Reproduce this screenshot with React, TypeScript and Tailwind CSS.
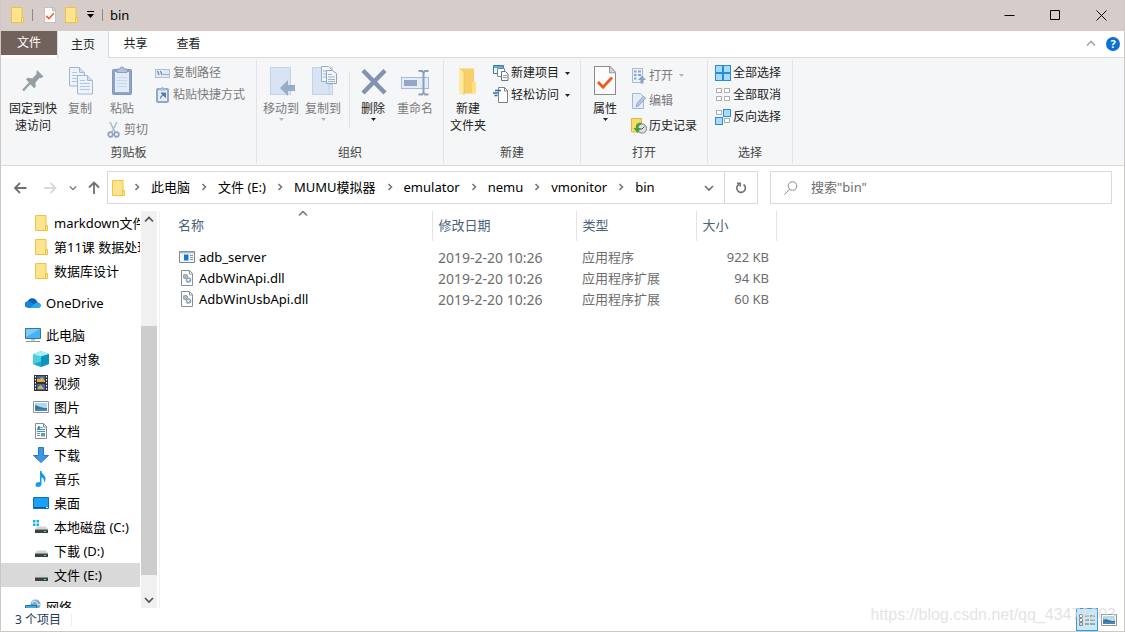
import type { ReactNode } from "react";
import clsx from "clsx";

// --- Icons ---

const FolderIcon = () => (
  <svg width="16" height="16" viewBox="0 0 16 16">
    <path d="M2.5.5H13v15H2.5z" fill="#ffe48f" />
    <path d="M2.500 15.500V.500h10.500v10M2.500 15.500H13" fill="none" stroke="#ebc53f" />
    <path d="M12.500 10.500h2v5h-2z" fill="#ffe48f" stroke="#ebc53f" />
  </svg>
);

const CheckDocIcon = ({ size }: { size: "small" | "large" }) => (
  <svg width={size === "small" ? 12 : 22} height={size === "small" ? 16 : 29} viewBox="0 0 22 28" preserveAspectRatio="none">
    <path d="M.5.5H16l5.5 5.500v21.500H.5z" fill="#fcfcfc" stroke="#8b8b8b" />
    <path d="M15.5.5v6h6" fill="#d4d4d4" stroke="#999" />
    <path d="M4 15.500l5 5L18 11" fill="none" stroke="#ef5a1c" strokeWidth="2.8" />
  </svg>
);

const PinIcon = () => (
  <svg width="24" height="28" viewBox="0 0 24 28">
    <path d="M16 4L22.500 10.500 20 12l-1.500 0-4 4.500.2 4.200-1.700 1.500L5 13.200l1.700-1.400 4.600.6 4.200-4.300V6z" fill="#949ea5" />
    <path d="M9 17L2 24.500" stroke="#949ea5" strokeWidth="2.4" />
  </svg>
);

const PageLines = ({ x, y }: { x: number; y: number }) => (
  <g>
    <path d={`M${x + 0.5} ${y + 0.5}h10l5 5v13.500h-15z`} fill="#edf3fb" stroke="#a6b6d0" />
    <path d={`M${x + 10.5} ${y + 0.5}v5h5`} fill="#d5e0ef" stroke="#a6b6d0" />
    <path d={`M${x + 3} ${y + 5.5}h5m-5 3h10m-10 3h10m-10 3h10`} stroke="#b3c4e0" />
  </g>
);

const CopyIcon = () => (
  <svg width="26" height="29" viewBox="0 0 26 29">
    <PageLines x={2} y={1} />
    <PageLines x={10} y={9} />
  </svg>
);

const PasteIcon = () => (
  <svg width="22" height="30" viewBox="0 0 22 30">
    <rect x="1.5" y="3.5" width="19" height="25" rx="1" fill="#8fa3c4" stroke="#8498bb" />
    <path d="M4 6h14v20H4z" fill="#e2ebf8" />
    <path d="M6 11.500h10m-10 3h10m-10 3h10m-10 3h10" stroke="#cbd8eb" />
    <path d="M6 6.500V3h3a2 2 0 0 1 4 0h3v3.500z" fill="#b4c2da" stroke="#8b9ebc" />
  </svg>
);

const PathIcon = () => (
  <svg width="16" height="16" viewBox="0 0 16 16">
    <rect x=".5" y="4.5" width="14" height="8" fill="#dfe9f6" stroke="#b1c0d7" />
    <path d="M2.500 6l1.500 4M5.500 6L7 10" stroke="#536f9c" />
    <path d="M8.500 9.500h1m1 0h1m1 0h1" stroke="#536f9c" />
  </svg>
);

const PasteShortcutIcon = () => (
  <svg width="16" height="16" viewBox="0 0 16 16">
    <rect x="2" y="2" width="11" height="13" rx="1" fill="#e3ecf8" stroke="#93a7c8" strokeWidth="2" />
    <path d="M4 3.500V1.500h2a1.500 1.500 0 0 1 3 0h2v2z" fill="#a9bad5" />
    <path d="M5.500 11.500c0-2 1-3 3-3.500M6 6h4.500v4.500z" fill="#5b78ad" stroke="#5b78ad" />
  </svg>
);

const CutIcon = () => (
  <svg width="14" height="16" viewBox="0 0 14 16">
    <path d="M3 0l5 10M10 0L5 10" stroke="#afbdd4" strokeWidth="1.6" />
    <circle cx="3.5" cy="12.5" r="2.3" fill="none" stroke="#8ba0c2" strokeWidth="1.7" />
    <circle cx="9.5" cy="12.5" r="2.3" fill="none" stroke="#8ba0c2" strokeWidth="1.7" />
  </svg>
);

const MoveToIcon = () => (
  <svg width="28" height="30" viewBox="0 0 28 30">
    <path d="M3.500 1.500h20v27h-20z" fill="#d8e4f4" stroke="#c3d2e7" />
    <path d="M20 20.500h3.500v8H20z" fill="#d8e4f4" stroke="#c3d2e7" />
    <path d="M13 22l8-8v5h7.500v6H21v5z" fill="#9aabc6" />
  </svg>
);

const CopyToIcon = () => (
  <svg width="28" height="30" viewBox="0 0 28 30">
    <path d="M3.500 1.500h20v27h-20z" fill="#d8e4f4" stroke="#c3d2e7" />
    <path d="M20 18.500h3.500v10H20z" fill="#d8e4f4" stroke="#c3d2e7" />
    <path d="M12.500.5h7l3 3v12h-10z" fill="#f2f6fc" stroke="#9badc9" />
    <path d="M17.500 4.500h6l4 3v10h-10z" fill="#f2f6fc" stroke="#8fa3c2" />
    <path d="M14 5h3m-3 3h3m-3 3h3m2-2.500h4m-4 2.500h7m-7 2.500h7m-7 2h7" stroke="#9db1d1" />
  </svg>
);

const DeleteIcon = () => (
  <svg width="28" height="30" viewBox="0 0 28 30">
    <path d="M4 4.500L26 27M26 4.500L4 27" stroke="#8193b1" strokeWidth="4.5" />
  </svg>
);

const RenameIcon = () => (
  <svg width="30" height="30" viewBox="0 0 30 30">
    <rect x="1.5" y="11.5" width="27" height="11" fill="#e3edf9" stroke="#a8bad5" />
    <path d="M4 14h13v6H4z" fill="#94a6c4" />
    <path d="M18.500 5h3.500l1.500 1.500L25 5h3.500M18.500 28.500h3.500l1.500-1.500 1.500 1.500h3.500M23.500 6v22" fill="none" stroke="#8c9ebc" strokeWidth="2" />
  </svg>
);

const NewFolderIcon = () => (
  <svg width="20" height="30" viewBox="0 0 20 30">
    <path d="M1 2.500h15v25H1z" fill="#f7cf68" />
    <path d="M1 2.500l5 4V29l-5-2z" fill="#ffeaa4" />
    <path d="M14 16h4v11.500h-4z" fill="#ffe083" />
    <path d="M6 6.500V29" stroke="#f0c65d" />
  </svg>
);

const NewItemIcon = () => (
  <svg width="16" height="16" viewBox="0 0 16 16">
    <path d="M.5.5h10v8H.5z" fill="#e5f2fb" stroke="#397fa5" />
    <path d="M1 1h9v2H1z" fill="#5eaed5" />
    <path d="M4.500 3.500h7v8h-7z" fill="#fff" stroke="#7c8994" />
    <path d="M8.500 6.500h4l2.500 2.500v6.500H8.500z" fill="#fff" stroke="#6a7580" />
    <path d="M10 10.500h4m-4 2h4" stroke="#8aa1b2" />
  </svg>
);

const EasyAccessIcon = () => (
  <svg width="16" height="16" viewBox="0 0 16 16">
    <path d="M5.500.5h6l3 3v12h-9z" fill="#fff" stroke="#7c8085" />
    <path d="M11.500.5V4h3" fill="none" stroke="#7c8085" />
    <path d="M2 3.500h6M0 6h5M1.500 8.500h3" stroke="#2472b0" strokeWidth="1.4" />
  </svg>
);

const OpenIcon = () => (
  <svg width="16" height="16" viewBox="0 0 16 16">
    <path d="M1.500.5h10v14h-10z" fill="#edf2fa" stroke="#a9b9d2" />
    <path d="M3 3.500h2.500M3 7h2.500M3 10.500h2.500M7 3.500h3M7 7h3" stroke="#8fa3c4" strokeWidth="2" />
    <path d="M9.500 15.500v-3.500H7l4-4.500 4 4.500h-2.500v3.500z" fill="#8fa2c2" />
  </svg>
);

const EditIcon = () => (
  <svg width="16" height="16" viewBox="0 0 16 16">
    <path d="M1.500.5h8l3 3v12h-11z" fill="#e4edf8" stroke="#a5b6d0" />
    <path d="M5 13.500l1-3L12.500 3l2 2-7 8z" fill="#b7c7df" stroke="#9aabc8" />
  </svg>
);

const HistoryIcon = () => (
  <svg width="16" height="16" viewBox="0 0 16 16">
    <path d="M.5.5h10v13.500H.5z" fill="#fadb70" stroke="#dfb83e" />
    <circle cx="11" cy="10.5" r="4.6" fill="#dfe1e2" stroke="#767c80" />
    <path d="M11 11l2.500-2.500M11 11H8.500" fill="none" stroke="#555" />
    <path d="M9.500 4.500c-4 .5-5 3-4.500 5.500H2.500l4 5 3.500-5H7.500c0-2 .5-3 3-3.500z" fill="#3ca43b" />
  </svg>
);

const tiles = [[0, 0], [9, 0], [0, 9], [9, 9]];

const SelectIcon = ({ picked }: { picked: number[] }) => (
  <svg width="16" height="16" viewBox="0 0 16 16">
    {tiles.map(([x, y], i) =>
      picked.includes(i) ? (
        <rect key={i} x={x ? 8.5 : 0.5} y={y ? 8.5 : 0.5} width="7" height="7" fill="#a9dbf9" stroke="#2a8dd4" />
      ) : (
        <rect key={i} x={x ? 9.5 : 1.5} y={y ? 9.5 : 1.5} width="5" height="4" fill="#fff" stroke="#b0b0b0" />
      )
    )}
  </svg>
);

const OneDriveIcon = () => (
  <svg width="16" height="16" viewBox="0 0 16 16">
    <path d="M3 12.500a3 3 0 0 1-.5-6A5 5 0 0 1 11 5l2 2.500-5 5z" fill="#0b64b8" />
    <path d="M2 12a3 3 0 0 1 2.500-5.500L10 10l-2 3H4z" fill="#1686d9" />
    <path d="M5 13l5-4.500c2-2 6-.5 6 2 0 1.500-1 2.500-2.500 2.500z" fill="#29a8ea" />
  </svg>
);

const PcIcon = () => (
  <svg width="16" height="16" viewBox="0 0 16 16">
    <path d="M.5 1.500h15v10H.5z" fill="#45b3f5" stroke="#38759b" />
    <path d="M1 2h14L1 10z" fill="#7ccbf9" />
    <path d="M6 12h4v1.500H6z" fill="#a9b9c4" />
    <path d="M1 14.500h14" stroke="#7d95a5" />
  </svg>
);

const CubeIcon = () => (
  <svg width="16" height="16" viewBox="0 0 16 16">
    <path d="M0 3l8-3 8 3v10l-8 3-8-3z" fill="#4ccfdd" />
    <path d="M0 3l8-3 8 3-8 2.500z" fill="#a9eef2" />
    <path d="M8 5.500L16 3v10l-8 3z" fill="#0d94bd" />
    <path d="M0 13l8-2.500V16z" fill="#1fa9c6" />
  </svg>
);

const VideoIcon = () => (
  <svg width="16" height="16" viewBox="0 0 16 16">
    <path d="M1 0h14v16H1z" fill="#30343a" />
    <path d="M2.500 1v15M13.500 1v15" stroke="#fff" strokeDasharray="1.5 1.5" />
    <path d="M4 1h8v6H4zM4 9h8v6H4z" fill="#4368ae" />
    <path d="M4 4h3l2-2 3 4v1H4zM5 12l3-2 3 4H5z" fill="#deae38" />
  </svg>
);

const PictureIcon = () => (
  <svg width="16" height="16" viewBox="0 0 16 16">
    <path d="M.5 2.500h15v11H.5z" fill="#fff" stroke="#8f9498" />
    <path d="M2 4h12v8H2z" fill="#a9d9f5" />
    <path d="M2 6c4 1 6 3 12 3v3H2z" fill="#357a89" />
    <path d="M2 10h12v2H2z" fill="#4c82bd" />
  </svg>
);

const DocumentIcon = () => (
  <svg width="16" height="16" viewBox="0 0 16 16">
    <path d="M2.500.5h8l3 3v12h-11z" fill="#fff" stroke="#858b90" />
    <path d="M10.500.5V4h3" fill="none" stroke="#858b90" />
    <path d="M7.500 4.500h2M4 6.500h8M4 8.500h8" stroke="#3b8fc7" />
    <path d="M4.500 5.500L6 3l1 2.500M4 10.500h3m-3 2h3" stroke="#6f91ab" />
    <path d="M8 10h4v3.500H8z" fill="#5ca0b8" />
  </svg>
);

const DownloadIcon = () => (
  <svg width="16" height="16" viewBox="0 0 16 16">
    <path d="M5.500.5h5v8h5L8 15.500.5 8.500h5z" fill="#3b97e3" stroke="#2878c0" />
  </svg>
);

const MusicIcon = () => (
  <svg width="16" height="16" viewBox="0 0 16 16">
    <path d="M7 0h1.500c0 3 4 4 4 7.500 0 1.500-.5 3-1.500 4 .5-3-1-4.500-2.500-5V13c0 2-1.500 3-3.500 3-1.500 0-2.500-.7-2.500-2 0-2 2.500-3.500 4.500-2.700z" fill="#169bec" />
  </svg>
);

const DesktopIcon = () => (
  <svg width="16" height="16" viewBox="0 0 16 16">
    <path d="M.5 2.500h15v11H.5z" fill="#1aa0f4" stroke="#0f6fb4" />
    <path d="M1 12.500h12" stroke="#0c5c98" />
    <path d="M13 12.500h2" stroke="#fff" />
  </svg>
);

const DriveIcon = ({ system }: { system?: boolean }) => (
  <svg width="16" height="16" viewBox="0 0 16 16">
    <path d="M4 7.500h9l2 3H2z" fill="#d2d4d5" />
    <path d="M2 10.500h13V14H2z" fill="#3c4144" />
    <path d="M11 12.500h2" stroke="#50e35c" />
    {system && <path d="M0 1h2.500v2.500H0zM3.500 1H6v2.500H3.500zM0 4.500h2.500V7H0zM3.500 4.500H6V7H3.500z" fill="#18afe9" />}
  </svg>
);

const NetworkIcon = () => (
  <svg width="16" height="16" viewBox="0 0 16 16">
    <circle cx="10.5" cy="5.500" r="5" fill="#79a9c5" />
    <path d="M7 4c2-3 4-2 5 0s2 1 3 2" fill="none" stroke="#c4dfeb" strokeWidth="1.5" />
    <path d="M.5 6.500h11v7H.5z" fill="#42abe6" stroke="#2c709a" />
  </svg>
);

const ExeIcon = () => (
  <svg width="16" height="16" viewBox="0 0 16 16">
    <path d="M.5 2.500h15v11H.5z" fill="#f5f7f8" stroke="#7f8a92" />
    <path d="M1 3.500h14" stroke="#aab2b8" strokeWidth="1.5" />
    <path d="M5 5.500h4.500v6H5z" fill="#0d7bdc" />
    <path d="M11 6.500h3m-3 2h3m-3 2h3" stroke="#89949b" />
  </svg>
);

const DllIcon = () => (
  <svg width="16" height="16" viewBox="0 0 16 16">
    <path d="M2.500.5h8l3 3v12h-11z" fill="#fff" stroke="#8e8e8e" />
    <path d="M10.500.5V4h3" fill="none" stroke="#8e8e8e" />
    <circle cx="6.500" cy="6.500" r="1.8" fill="none" stroke="#8b9aa5" strokeWidth="1.4" />
    <circle cx="9.500" cy="10" r="2" fill="none" stroke="#86a9c1" strokeWidth="1.6" />
    <path d="M4.500 4.500l4 4M8.500 12.500l3-3" stroke="#9aa8b2" />
  </svg>
);

const Chevron = ({ dir, className }: { dir: "up" | "down" | "right"; className?: string }) => {
  const paths = { up: "M1 6.500L5 2.500l4 4", down: "M1 3L5 7l4-4", right: "M3.500 2L6.500 5l-3 3" };
  return (
    <svg width="10" height="10" viewBox="0 0 10 10" className={className} fill="none" stroke="currentColor" strokeWidth="1.6">
      <path d={paths[dir]} />
    </svg>
  );
};

const Arrow = ({ dir, className }: { dir: "left" | "right" | "up"; className?: string }) => {
  const paths = { left: "M13.500 7H2M7 2L2 7l5 5", right: "M1 7h11.500M7.500 2l5 5-5 5", up: "M7 13V1.500M2 6.500l5-5 5 5" };
  return (
    <svg width="14" height="14" viewBox="0 0 14 14" className={className} fill="none" stroke="currentColor" strokeWidth="1.8">
      <path d={paths[dir]} />
    </svg>
  );
};

const Caret = ({ className }: { className?: string }) => (
  <svg width="5" height="3" viewBox="0 0 5 3" className={className} fill="currentColor">
    <path d="M0 0h5L2.500 3z" />
  </svg>
);

// --- Ribbon ---

const Group = ({ label, className, children }: { label: string; className: string; children: ReactNode }) => (
  <section className={clsx("my-0.5 flex shrink-0 flex-col border-r border-[#e2e3e4]", className)}>
    <div className="flex h-[84px]">{children}</div>
    <h2 className="text-center leading-5 text-[#444]">{label}</h2>
  </section>
);

type BigProps = { icon: ReactNode; label: string; second?: string; caret?: boolean; disabled?: boolean; className: string };

const BigButton = ({ icon, label, second, caret, disabled, className }: BigProps) => (
  <button disabled={disabled} className={clsx("flex flex-col items-center whitespace-nowrap pt-1.5 leading-[17px]", disabled ? "text-[#7a7a7a]" : "text-[#222]", className)}>
    <span className="flex h-[34px] items-start justify-center">{icon}</span>
    <span>{label}</span>
    {second && <span>{second}</span>}
    {caret && <Caret className={clsx("mt-px", disabled && "text-[#b5b5b5]")} />}
  </button>
);

type SmallProps = { icon: ReactNode; label: string; caret?: boolean; disabled?: boolean; tall?: boolean };

const SmallButton = ({ icon, label, caret, disabled, tall }: SmallProps) => (
  <button disabled={disabled} className={clsx("flex items-center gap-0.5 whitespace-nowrap", tall ? "h-[25px]" : "h-[22px]", disabled ? "text-[#7a7a7a]" : "text-[#222]")}>
    {icon}
    <span>{label}</span>
    {caret && <Caret className={clsx("ml-1", disabled && "text-[#b5b5b5]")} />}
  </button>
);

const Ribbon = () => (
  <div className="flex h-[108px] shrink-0 overflow-hidden border-b border-[#dadbdc] bg-[#f5f6f7]">
    <Group label="剪贴板" className="w-64 [&>div]:pl-2">
      <BigButton icon={<PinIcon />} label="固定到快" second="速访问" className="w-12" />
      <BigButton icon={<CopyIcon />} label="复制" disabled className="w-[46px]" />
      <div className="flex w-[52px] flex-col pl-1">
        <BigButton icon={<PasteIcon />} label="粘贴" disabled className="w-[30px]" />
        <button disabled className="mt-1 flex items-center gap-[3px] whitespace-nowrap leading-[17px] text-[#7a7a7a]">
          <CutIcon />
          剪切
        </button>
      </div>
      <div className="flex flex-col pt-0.5">
        <SmallButton icon={<PathIcon />} label="复制路径" disabled />
        <SmallButton icon={<PasteShortcutIcon />} label="粘贴快捷方式" disabled />
      </div>
    </Group>
    <Group label="组织" className="w-[187px] [&>div]:pl-[3px]">
      <BigButton icon={<MoveToIcon />} label="移动到" caret disabled className="w-[42px]" />
      <BigButton icon={<CopyToIcon />} label="复制到" caret disabled className="w-[42px]" />
      <div className="ml-[5px] mr-0.5 mt-3 h-14 w-px bg-[#e2e3e4]" />
      <BigButton icon={<DeleteIcon />} label="删除" caret className="w-[42px]" />
      <BigButton icon={<RenameIcon />} label="重命名" disabled className="w-[42px]" />
    </Group>
    <Group label="新建" className="w-[137px]">
      <BigButton icon={<NewFolderIcon />} label="新建" second="文件夹" className="w-12" />
      <div className="flex flex-col pl-px pt-0.5">
        <SmallButton icon={<NewItemIcon />} label="新建项目" caret />
        <SmallButton icon={<EasyAccessIcon />} label="轻松访问" caret />
      </div>
    </Group>
    <Group label="打开" className="w-[127px]">
      <BigButton icon={<CheckDocIcon size="large" />} label="属性" caret className="w-12" />
      <div className="flex flex-col pl-0.5 pt-[3px]">
        <SmallButton icon={<OpenIcon />} label="打开" caret disabled tall />
        <SmallButton icon={<EditIcon />} label="编辑" disabled tall />
        <SmallButton icon={<HistoryIcon />} label="历史记录" tall />
      </div>
    </Group>
    <Group label="选择" className="w-[85px] [&>div]:pl-[7px]">
      <div className="flex flex-col pt-0.5">
        <SmallButton icon={<SelectIcon picked={[0, 1, 2, 3]} />} label="全部选择" />
        <SmallButton icon={<SelectIcon picked={[]} />} label="全部取消" />
        <SmallButton icon={<SelectIcon picked={[1, 2]} />} label="反向选择" />
      </div>
    </Group>
  </div>
);

// --- Title bar and tabs ---

const TitleBar = () => (
  <header className="flex h-[31px] shrink-0 items-center bg-[#d6cdca]">
    <div className="flex flex-1 items-center pl-2">
      <FolderIcon />
      <span className="ml-[7px] h-3 w-px bg-[#8f8886]" />
      <button aria-label="属性" className="ml-[11px]"><CheckDocIcon size="small" /></button>
      <button aria-label="新建文件夹" className="ml-[7px]"><FolderIcon /></button>
      <button aria-label="自定义快速访问工具栏" className="ml-[7px] flex h-2 w-2 flex-col items-center gap-0.5">
        <span className="h-px w-[7px] bg-black" />
        <svg width="7" height="4" viewBox="0 0 7 4"><path d="M0 0h7L3.500 4z" /></svg>
      </button>
      <span className="ml-2 h-3 w-px bg-[#8f8886]" />
      <h1 className="ml-[7px] pt-px text-[13px] text-black">bin</h1>
    </div>
    <button aria-label="最小化" className="flex w-[46px] justify-center">
      <svg width="11" height="11" viewBox="0 0 11 11"><path d="M.5 5.500h10" stroke="#000" /></svg>
    </button>
    <button aria-label="最大化" className="flex w-[46px] justify-center">
      <svg width="11" height="11" viewBox="0 0 11 11"><path d="M.5.5h9v9h-9z" fill="none" stroke="#000" /></svg>
    </button>
    <button aria-label="关闭" className="flex w-[46px] justify-center">
      <svg width="11" height="11" viewBox="0 0 11 11"><path d="M.5.5l10 10M10.500.5l-10 10" stroke="#000" /></svg>
    </button>
  </header>
);

const Tabs = () => (
  <nav className="flex h-[27px] shrink-0 items-stretch text-[#222]">
    <button className="mb-[3px] w-14 bg-[#71625c] text-white">文件</button>
    <button className="w-[52px] border-x border-[#dadbdc] bg-[#f5f6f7]">主页</button>
    <div className="flex flex-1 items-stretch border-b border-[#dadbdc]">
      <button className="w-[53px]">共享</button>
      <button className="w-[53px]">查看</button>
      <div className="flex-1" />
      <button aria-label="折叠功能区" className="mr-2.5 text-[#a5a5a5]"><Chevron dir="up" /></button>
      <button aria-label="帮助" className="mr-1 h-3.5 w-3.5 self-center rounded-full bg-[#0b72cf] text-[11px] font-bold leading-[14px] text-white">?</button>
    </div>
  </nav>
);

// --- Address bar ---

const crumbs = ["此电脑", "文件 (E:)", "MUMU模拟器", "emulator", "nemu", "vmonitor", "bin"];

const AddressBar = () => (
  <div className="mt-[5px] flex h-[33px] shrink-0 pr-3 text-[13px]">
    <div className="flex w-[106px] shrink-0 items-center pl-3 text-[#707070]">
      <button aria-label="后退"><Arrow dir="left" /></button>
      <button aria-label="前进" disabled className="ml-4 text-[#d9d9d9]"><Arrow dir="right" /></button>
      <button aria-label="最近浏览的位置" className="ml-3"><Chevron dir="down" className="h-2 w-2" /></button>
      <button aria-label="上移" className="ml-2.5"><Arrow dir="up" /></button>
    </div>
    <div className="flex min-w-0 flex-1 items-center border border-[#d9d9d9]">
      <span className="ml-0.5 shrink-0"><FolderIcon /></span>
      {crumbs.map((crumb, i) => (
        <span key={crumb} className="flex shrink-0 items-center">
          <Chevron dir="right" className={clsx("mr-[9px] text-[#777]", i === 0 ? "ml-1.5" : "ml-[9px]")} />
          <button className="text-black">{crumb}</button>
        </span>
      ))}
      <span className="flex-1" />
      <button aria-label="以前的位置" className="mr-2.5 text-[#707070]"><Chevron dir="down" /></button>
      <button aria-label="刷新" className="flex h-full w-[33px] items-center justify-center border-l border-[#d9d9d9] text-[#707070]">
        <svg width="12" height="12" viewBox="0 0 12 12" fill="none" stroke="currentColor" strokeWidth="1.6">
          <path d="M8.500 2.500a4.300 4.300 0 1 1-4.500-.2M2 1.200h3.200v3.200" />
        </svg>
      </button>
    </div>
    <label className="ml-3 flex w-[342px] shrink-0 items-center border border-[#d9d9d9] pl-[13px]">
      <svg width="14" height="14" viewBox="0 0 14 14" fill="none" stroke="#888">
        <circle cx="8.500" cy="5" r="4.3" />
        <path d="M5.500 8.200L.5 13.500" />
      </svg>
      <input type="search" aria-label="搜索" placeholder={'搜索"bin"'} className="ml-[13px] min-w-0 flex-1 bg-transparent outline-none placeholder:text-[#6d6d6d]" />
    </label>
  </div>
);

// --- Navigation pane ---

type NavItem = { label: string; icon: ReactNode; root?: boolean; selected?: boolean };

const navItems: NavItem[] = [
  { label: "markdown文件", icon: <FolderIcon /> },
  { label: "第11课 数据处理", icon: <FolderIcon /> },
  { label: "数据库设计", icon: <FolderIcon /> },
  { label: "OneDrive", icon: <OneDriveIcon />, root: true },
  { label: "此电脑", icon: <PcIcon />, root: true },
  { label: "3D 对象", icon: <CubeIcon /> },
  { label: "视频", icon: <VideoIcon /> },
  { label: "图片", icon: <PictureIcon /> },
  { label: "文档", icon: <DocumentIcon /> },
  { label: "下载", icon: <DownloadIcon /> },
  { label: "音乐", icon: <MusicIcon /> },
  { label: "桌面", icon: <DesktopIcon /> },
  { label: "本地磁盘 (C:)", icon: <DriveIcon system /> },
  { label: "下載 (D:)", icon: <DriveIcon /> },
  { label: "文件 (E:)", icon: <DriveIcon />, selected: true },
  { label: "网络", icon: <NetworkIcon />, root: true },
];

const Sidebar = () => (
  <aside className="flex w-[159px] shrink-0 border-r border-[#f0f0f0] pr-0.5">
    <ul className="min-w-0 flex-1 overflow-hidden">
      {navItems.map((item) => (
        <li key={item.label} className={clsx(item.root && "mt-2")}>
          <button
            className={clsx(
              "flex h-6 w-full items-center gap-[5px] overflow-hidden whitespace-nowrap text-left text-black",
              item.root ? "pl-6" : "pl-8",
              item.selected && "bg-[#d9d9d9]"
            )}
          >
            <span className="shrink-0">{item.icon}</span>
            <span className="pt-px">{item.label}</span>
          </button>
        </li>
      ))}
    </ul>
    <div className="ml-px flex w-4 flex-col items-center bg-[#f0f0f0] text-[#505050]">
      <button aria-label="向上滚动" className="flex h-[17px] items-center"><Chevron dir="up" /></button>
      <div className="flex-[98]" />
      <div className="w-full flex-[249] bg-[#cdcdcd]" />
      <div className="flex-[16]" />
      <button aria-label="向下滚动" className="flex h-[17px] items-center"><Chevron dir="down" /></button>
    </div>
  </aside>
);

// --- File list ---

const files = [
  { name: "adb_server", date: "2019-2-20 10:26", type: "应用程序", size: "922 KB", icon: <ExeIcon /> },
  { name: "AdbWinApi.dll", date: "2019-2-20 10:26", type: "应用程序扩展", size: "94 KB", icon: <DllIcon /> },
  { name: "AdbWinUsbApi.dll", date: "2019-2-20 10:26", type: "应用程序扩展", size: "60 KB", icon: <DllIcon /> },
];

const headerCell = "border-r border-[#e5e5e5] pl-1.5 text-left font-normal";

const FileList = () => (
  <main className="min-w-0 flex-1 overflow-hidden">
    <table className="w-[616px] table-fixed">
      <thead>
        <tr className="h-[30px] text-[#4c607a]">
          <th className="relative w-[272px] border-r border-[#e5e5e5] pl-[18px] text-left font-normal">
            名称
            <Chevron dir="up" className="absolute -top-0.5 left-[138px] text-[#777]" />
          </th>
          <th className={clsx(headerCell, "w-36")}>修改日期</th>
          <th className={clsx(headerCell, "w-[120px]")}>类型</th>
          <th className={clsx(headerCell, "w-20")}>大小</th>
        </tr>
      </thead>
      <tbody className="text-[#6d6d6d] before:block before:h-1.5">
        {files.map((file) => (
          <tr key={file.name} className="h-[21px]">
            <td className="pl-[19px]">
              <span className="flex items-center gap-1 text-black">
                {file.icon}
                {file.name}
              </span>
            </td>
            <td className="pl-1.5 text-sm leading-5">{file.date}</td>
            <td className="pl-1.5">{file.type}</td>
            <td className="pr-[7px] text-right">{file.size}</td>
          </tr>
        ))}
      </tbody>
    </table>
  </main>
);

const StatusBar = () => (
  <footer className="flex h-[23px] shrink-0 items-center pl-3.5 text-[#1e395b]">
    <span>3 个项目</span>
    <span className="ml-2.5 h-3 w-px bg-[#eee]" />
    <span className="flex-1" />
    <button aria-label="详细信息" className="flex h-full w-[22px] items-center justify-center border border-[#26a0da] bg-[#cbe8f6]">
      <svg width="16" height="14" viewBox="0 0 16 14" fill="none">
        <path d="M.5 1.500h3v3h-3zM.5 5.500h3v3h-3zM.5 9.500h3v3h-3z" fill="#fff" stroke="#888" />
        <path d="M6 3h4m1 0h5M6 7h4m1 0h5M6 11h4m1 0h5" stroke="#666" />
        <path d="M1.500 11h1" stroke="#c33" />
      </svg>
    </button>
    <button aria-label="大缩略图" className="flex w-[26px] justify-center pr-1"><PictureIcon /></button>
  </footer>
);

export default function App() {
  return (
    <div className="relative flex h-screen flex-col overflow-hidden border-x border-b border-[#d0c7c4] bg-white font-['Noto_Sans','Noto_Sans_CJK_SC',sans-serif] text-xs">
      <TitleBar />
      <Tabs />
      <Ribbon />
      <AddressBar />
      <div className="mt-[7px] flex min-h-0 flex-1 text-[13px]">
        <Sidebar />
        <FileList />
      </div>
      <StatusBar />
      <span className="pointer-events-none absolute bottom-1 right-2 font-['Liberation_Sans',sans-serif] text-base text-[#dcdcdc]/80">
        https://blog.csdn.net/qq_43479203
      </span>
    </div>
  );
}
